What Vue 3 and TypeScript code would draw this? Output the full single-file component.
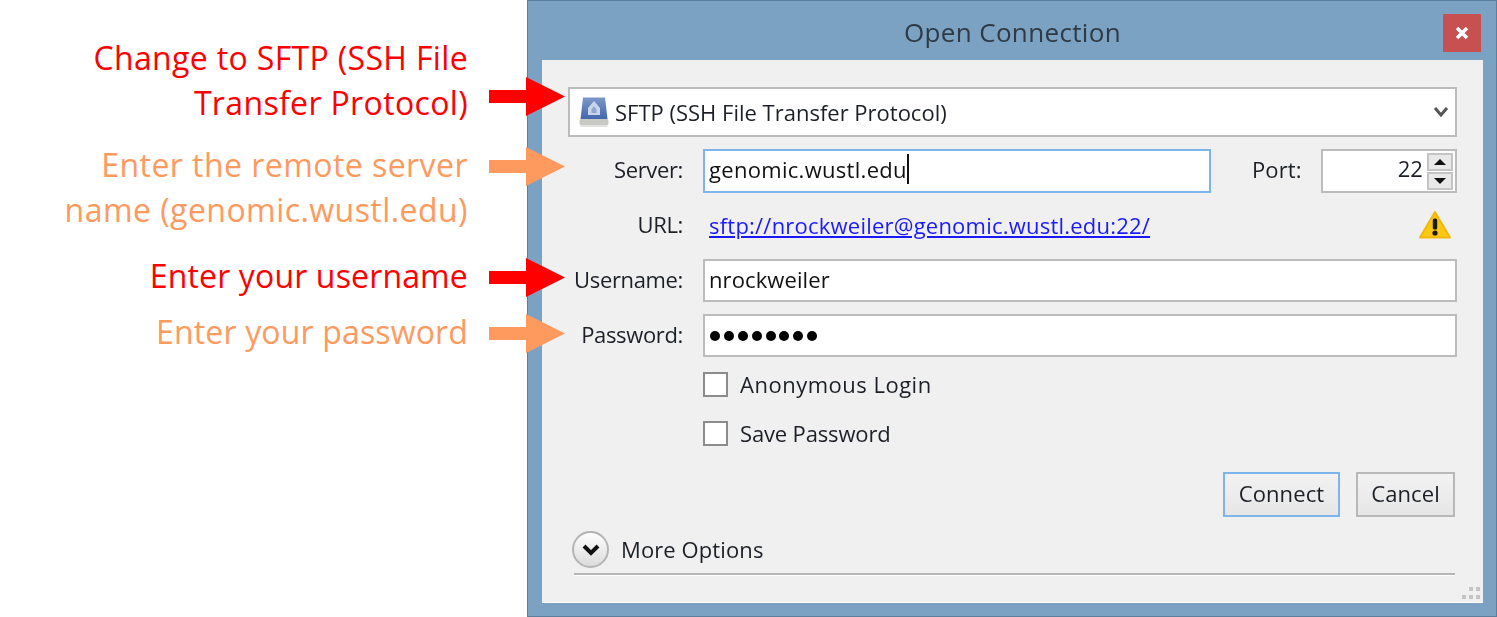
<template>
  <div class="page">
    <aside class="notes">
      <div v-for="note in notes" :key="note.text" class="note" :class="[note.tone, note.slot]">
        <p class="note-text">{{ note.text }}</p>
        <svg class="arrow" width="76" height="39" viewBox="0 0 76 39">
          <path d="M0 13H37V0L76 19.5 37 39V26H0Z" />
        </svg>
      </div>
    </aside>

    <section class="dialog">
      <header class="titlebar">
        <h1 class="title">Open Connection</h1>
        <button class="close" aria-label="Close">
          <svg width="14" height="14" viewBox="0 0 14 14">
            <path d="M2 2L12 12M12 2L2 12" />
          </svg>
        </button>
      </header>

      <div class="body">
        <div class="combo">
          <svg class="drive" width="30" height="32" viewBox="0 0 30 32">
            <defs>
              <linearGradient id="driveFill" x1="0" y1="0" x2="0" y2="1">
                <stop offset="0" stop-color="#7d97c8" />
                <stop offset="1" stop-color="#4468ad" />
              </linearGradient>
            </defs>
            <path d="M4 1.5H26L28.5 23H1.5Z" fill="url(#driveFill)" />
            <path d="M15 5L21 12V19H9V12Z" fill="#c9d5ea" />
            <path d="M15 10L17.5 13.5V17H12.5V13.5Z" fill="#8ea6d0" />
            <rect x="0.5" y="23" width="29" height="6" rx="1.5" fill="#c9c9c4" />
            <rect x="1.5" y="29" width="27" height="2" fill="#e2e2e0" />
          </svg>
          <span class="combo-text">SFTP (SSH File Transfer Protocol)</span>
          <svg class="chevron" width="16" height="12" viewBox="0 0 16 12">
            <path d="M2 2L8 9L14 2" />
          </svg>
        </div>

        <div class="row server-row">
          <label class="label">Server:</label>
          <div class="input focused">genomic.wustl.edu<i class="caret"></i></div>
          <label class="port-label">Port:</label>
          <div class="spinner">
            <span class="spin-value">22</span>
            <div class="spin-buttons">
              <span class="spin-btn"><i class="tri up"></i></span>
              <span class="spin-btn"><i class="tri down"></i></span>
            </div>
          </div>
        </div>

        <div class="row url-row">
          <label class="label">URL:</label>
          <a class="link" href="#">sftp://nrockweiler@genomic.wustl.edu:22/</a>
          <svg class="warn" width="34" height="30" viewBox="0 0 34 30">
            <path d="M17 2L32 27.5H2Z" fill="#fcc70f" stroke="#f0b90b" stroke-width="2" stroke-linejoin="round" />
            <rect x="14.8" y="8.5" width="4.4" height="11" rx="1.5" fill="#1a1a1a" />
            <circle cx="17" cy="23" r="2.6" fill="#1a1a1a" />
          </svg>
        </div>

        <div class="row user-row">
          <label class="label">Username:</label>
          <div class="input short">nrockweiler</div>
        </div>

        <div class="row pass-row">
          <label class="label">Password:</label>
          <div class="input short dots">
            <i v-for="n in 8" :key="n" class="dot"></i>
          </div>
        </div>

        <div class="check first"><i class="box"></i><span>Anonymous Login</span></div>
        <div class="check second"><i class="box"></i><span>Save Password</span></div>

        <div class="actions">
          <button class="btn primary">Connect</button>
          <button class="btn cancel">Cancel</button>
        </div>

        <div class="more">
          <span class="more-icon">
            <svg width="20" height="14" viewBox="0 0 20 14">
              <path d="M3 3L10 10L17 3" />
            </svg>
          </span>
          <span class="more-text">More Options</span>
        </div>
        <div class="separator"></div>

        <svg class="grip" width="18" height="12" viewBox="0 0 18 12">
          <rect x="0" y="8" width="4" height="4" />
          <rect x="7" y="8" width="4" height="4" />
          <rect x="14" y="8" width="4" height="4" />
          <rect x="7" y="0" width="4" height="4" />
          <rect x="14" y="0" width="4" height="4" />
        </svg>
      </div>
    </section>
  </div>
</template>

<script setup lang="ts">
interface Note {
  text: string
  tone: 'red' | 'orange'
  slot: string
}

const notes: Note[] = [
  { text: 'Change to SFTP (SSH File Transfer Protocol)', tone: 'red', slot: 'protocol' },
  { text: 'Enter the remote server name (genomic.wustl.edu)', tone: 'orange', slot: 'server' },
  { text: 'Enter your username', tone: 'red', slot: 'username' },
  { text: 'Enter your password', tone: 'orange', slot: 'password' },
]
</script>

<style>
html,
body {
  margin: 0;
  background: #fff;
}
</style>

<style scoped>
.page {
  display: flex;
  width: 1497px;
  height: 617px;
  overflow: hidden;
  font-family: "Open Sans", "Liberation Sans", sans-serif;
}

.notes {
  flex: 0 0 527px;
  width: 527px;
  padding-top: 35px;
  box-sizing: border-box;
}

.note {
  position: relative;
  z-index: 2;
  display: flex;
  align-items: flex-start;
  width: 565px;
}

.note-text {
  flex: 0 0 auto;
  box-sizing: border-box;
  width: 468px;
  margin: 0 21px 0 0;
  padding-left: 50px;
  font-size: 32px;
  line-height: 45px;
  text-align: right;
  letter-spacing: 0.35px;
}

.username .note-text,
.password .note-text {
  letter-spacing: 0.15px;
}

.server .note-text { letter-spacing: 0.45px; }

.red { color: #ff0000; }
.orange { color: #ff9a5f; }

.arrow { flex: 0 0 auto; }
.red .arrow { fill: #ff0000; }
.orange .arrow { fill: #ff9a5f; }

.protocol .arrow { margin-top: 42px; }
.server { margin-top: 17px; }
.server .arrow { margin-top: 5px; }
.username { margin-top: 21px; }
.username .arrow { margin-top: 5px; }
.password { margin-top: 11px; }
.password .arrow { margin-top: 5px; }

.dialog {
  flex: 1;
  display: flex;
  flex-direction: column;
  box-sizing: border-box;
  height: 617px;
  padding: 0 13px 13px 14px;
  background: #7ba2c3;
  border: 1px solid #5d7f9e;
  filter: blur(0.4px);
}

.titlebar {
  position: relative;
  flex: 0 0 59px;
  display: flex;
  align-items: center;
  justify-content: center;
}

.title {
  margin: 0;
  padding-top: 2px;
  font-size: 26px;
  font-weight: 400;
  letter-spacing: 0.35px;
  color: #2f3a44;
}

.close {
  position: absolute;
  top: 13px;
  right: 2px;
  display: flex;
  align-items: center;
  justify-content: center;
  width: 38px;
  height: 38px;
  padding: 0;
  background: #c75050;
  border: 0;
}

.close path {
  fill: none;
  stroke: #fff;
  stroke-width: 3.5;
}

.body {
  position: relative;
  flex: 1;
  box-sizing: border-box;
  padding: 27px 26px 0;
  background: #f0f0f0;
  border: 1px solid #fff;
  border-width: 0 0 1px;
  color: #1c2026;
  font-size: 22px;
  letter-spacing: 0.1px;
}

.combo {
  display: flex;
  align-items: center;
  box-sizing: border-box;
  height: 50px;
  padding: 0 6px 0 9px;
  background: #fff;
  border: 2px solid #bcbcbc;
}

.drive { margin-right: 6px; }

.combo-text {
  flex: 1;
  letter-spacing: 0;
}

.chevron path {
  fill: none;
  stroke: #555;
  stroke-width: 3;
}

.row {
  display: flex;
  align-items: center;
}

.label {
  flex: 0 0 115px;
  box-sizing: border-box;
  margin-right: 20px;
  padding-bottom: 4px;
  text-align: right;
  letter-spacing: -0.35px;
}

.server-row {
  height: 44px;
  margin-top: 12px;
}

.input {
  display: flex;
  align-items: center;
  box-sizing: border-box;
  padding: 0 4px 4px;
  background: #fff;
  border: 2px solid #bcbcbc;
  color: #111;
}

.input.focused {
  flex: 0 0 508px;
  height: 44px;
  border-color: #7db4ec;
  letter-spacing: 0.3px;
}

.input.short {
  flex: 1;
  height: 43px;
}

.caret {
  width: 2px;
  height: 30px;
  background: #111;
}

.port-label {
  width: 69px;
  margin-left: 41px;
  padding-bottom: 4px;
}

.spinner {
  display: flex;
  align-items: center;
  justify-content: flex-end;
  box-sizing: border-box;
  width: 136px;
  height: 44px;
  padding-right: 2px;
  background: #fff;
  border: 2px solid #bcbcbc;
}

.spin-value {
  margin-right: 4px;
  padding-bottom: 6px;
}

.spin-buttons {
  display: flex;
  flex-direction: column;
  gap: 1px;
}

.spin-btn {
  display: flex;
  align-items: center;
  justify-content: center;
  box-sizing: border-box;
  width: 26px;
  height: 18px;
  background: #e9e9e9;
  border: 2px solid #c4c4c4;
}

.tri {
  width: 0;
  height: 0;
  border-left: 6px solid transparent;
  border-right: 6px solid transparent;
}

.tri.up { border-bottom: 6px solid #111; }
.tri.down { border-top: 6px solid #111; }

.url-row {
  height: 66px;
}

.link {
  flex: 1;
  margin-left: 6px;
  padding-bottom: 3px;
  color: #1a1aff;
  letter-spacing: 0.22px;
  text-decoration: underline;
}

.warn { margin: 0 5px 3px 0; }

.pass-row { margin-top: 12px; }

.dots {
  gap: 3.9px;
  padding: 0 4px 0 5px;
}

.dot {
  width: 10px;
  height: 10px;
  border-radius: 50%;
  background: #000;
}

.check {
  display: flex;
  align-items: center;
  height: 25px;
  margin-left: 135px;
}

.check span { padding-bottom: 2px; }

.check.first { margin-top: 15px; }
.check.second { margin-top: 24px; }

.check.first span { letter-spacing: 0.5px; }
.check.second span { letter-spacing: -0.15px; }

.box {
  box-sizing: border-box;
  width: 25px;
  height: 25px;
  margin-right: 12px;
  background: #fff;
  border: 2px solid #8c8c8c;
}

.actions {
  display: flex;
  justify-content: flex-end;
  gap: 16px;
  margin: 26px 2px 0 0;
}

.btn {
  box-sizing: border-box;
  height: 45px;
  padding: 0 0 3px;
  background: linear-gradient(#f2f2f2, #e6e6e6);
  font: inherit;
  letter-spacing: inherit;
  color: inherit;
}

.btn.primary {
  width: 117px;
  border: 2px solid #7db4ec;
}

.btn.cancel {
  width: 99px;
  border: 2px solid #b8b8b8;
}

.more {
  display: flex;
  align-items: center;
  height: 37px;
  margin: 14px 0 0 4px;
}

.more-text { padding-bottom: 2px; }

.more-icon {
  display: flex;
  align-items: center;
  justify-content: center;
  box-sizing: border-box;
  width: 37px;
  height: 37px;
  margin-right: 12px;
  border: 2px solid #b4b4b4;
  border-radius: 50%;
  background: linear-gradient(#fdfdfd, #dcdcdc);
}

.more-icon path {
  fill: none;
  stroke: #111;
  stroke-width: 4;
}

.separator {
  height: 2px;
  margin: 5px 2px 0 6px;
  background: #b5b5b5;
  border-bottom: 1px solid #fff;
}

.grip {
  position: absolute;
  right: 3px;
  bottom: 3px;
  fill: #c4c4c4;
}
</style>
